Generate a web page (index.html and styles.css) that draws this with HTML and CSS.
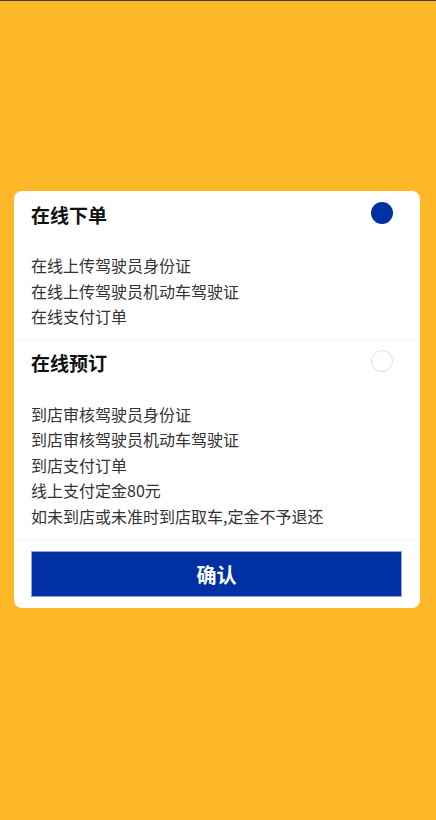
FILE: index.html
```html
<!DOCTYPE html>
<html lang="zh-CN">
<head>
<meta charset="utf-8">
<link rel="stylesheet" href="styles.css">
</head>
<body>
<div class="topline"></div>
<div class="page">
  <div class="card">
    <div class="option first">
      <div class="option-head">
        <span class="title">在线下单</span>
        <span class="radio checked"></span>
      </div>
      <div class="lines">
        <p>在线上传驾驶员身份证</p>
        <p>在线上传驾驶员机动车驾驶证</p>
        <p>在线支付订单</p>
      </div>
    </div>
    <div class="option second">
      <div class="option-head">
        <span class="title">在线预订</span>
        <span class="radio"></span>
      </div>
      <div class="lines">
        <p>到店审核驾驶员身份证</p>
        <p>到店审核驾驶员机动车驾驶证</p>
        <p>到店支付订单</p>
        <p>线上支付定金80元</p>
        <p>如未到店或未准时到店取车,定金不予退还</p>
      </div>
    </div>
    <div class="footer">
      <button class="confirm">确认</button>
    </div>
  </div>
</div>
</body>
</html>
```

FILE: styles.css
```css
html, body {
  margin: 0;
  padding: 0;
}
body {
  background: #fdb82a;
  height: 820px;
  font-family: "Noto Sans CJK SC", "Noto Sans", sans-serif;
  overflow: hidden;
}
.topline {
  height: 1px;
  background: #3a3a3a;
}
.page {
  padding: 190px 16px 0 14px;
}
.card {
  background: #fff;
  border-radius: 8px;
  overflow: hidden;
}
.option {
  padding: 0 27px 10px 17px;
  border-bottom: 1px solid #fdf3e2;
}
.option.first {
  padding-top: 12px;
}
.option.second {
  padding-top: 10px;
}
.option-head {
  display: flex;
  justify-content: space-between;
  align-items: center;
  height: 24px;
}
.title {
  font-size: 19px;
  font-weight: bold;
  color: #111;
  line-height: 24px;
}
.radio {
  width: 22px;
  height: 22px;
  border-radius: 50%;
  box-sizing: border-box;
  border: 1.5px solid #dedede;
  margin-top: -4px;
}
.radio.checked {
  border: none;
  background: #0030a3;
}
.lines {
  margin-top: 26px;
}
.option.second .lines {
  margin-top: 27px;
}
.lines p {
  margin: 0;
  font-size: 16px;
  line-height: 25.5px;
  color: #333;
}
.footer {
  padding: 11px 18px 11px 17px;
}
.confirm {
  display: block;
  width: 100%;
  height: 46px;
  border: 1px solid #8fa3d6;
  background: #0030a3;
  color: #fff;
  font-family: "Noto Sans CJK SC", "Noto Sans", sans-serif;
  font-size: 20px;
  font-weight: bold;
  padding: 0;
  cursor: pointer;
}
```
